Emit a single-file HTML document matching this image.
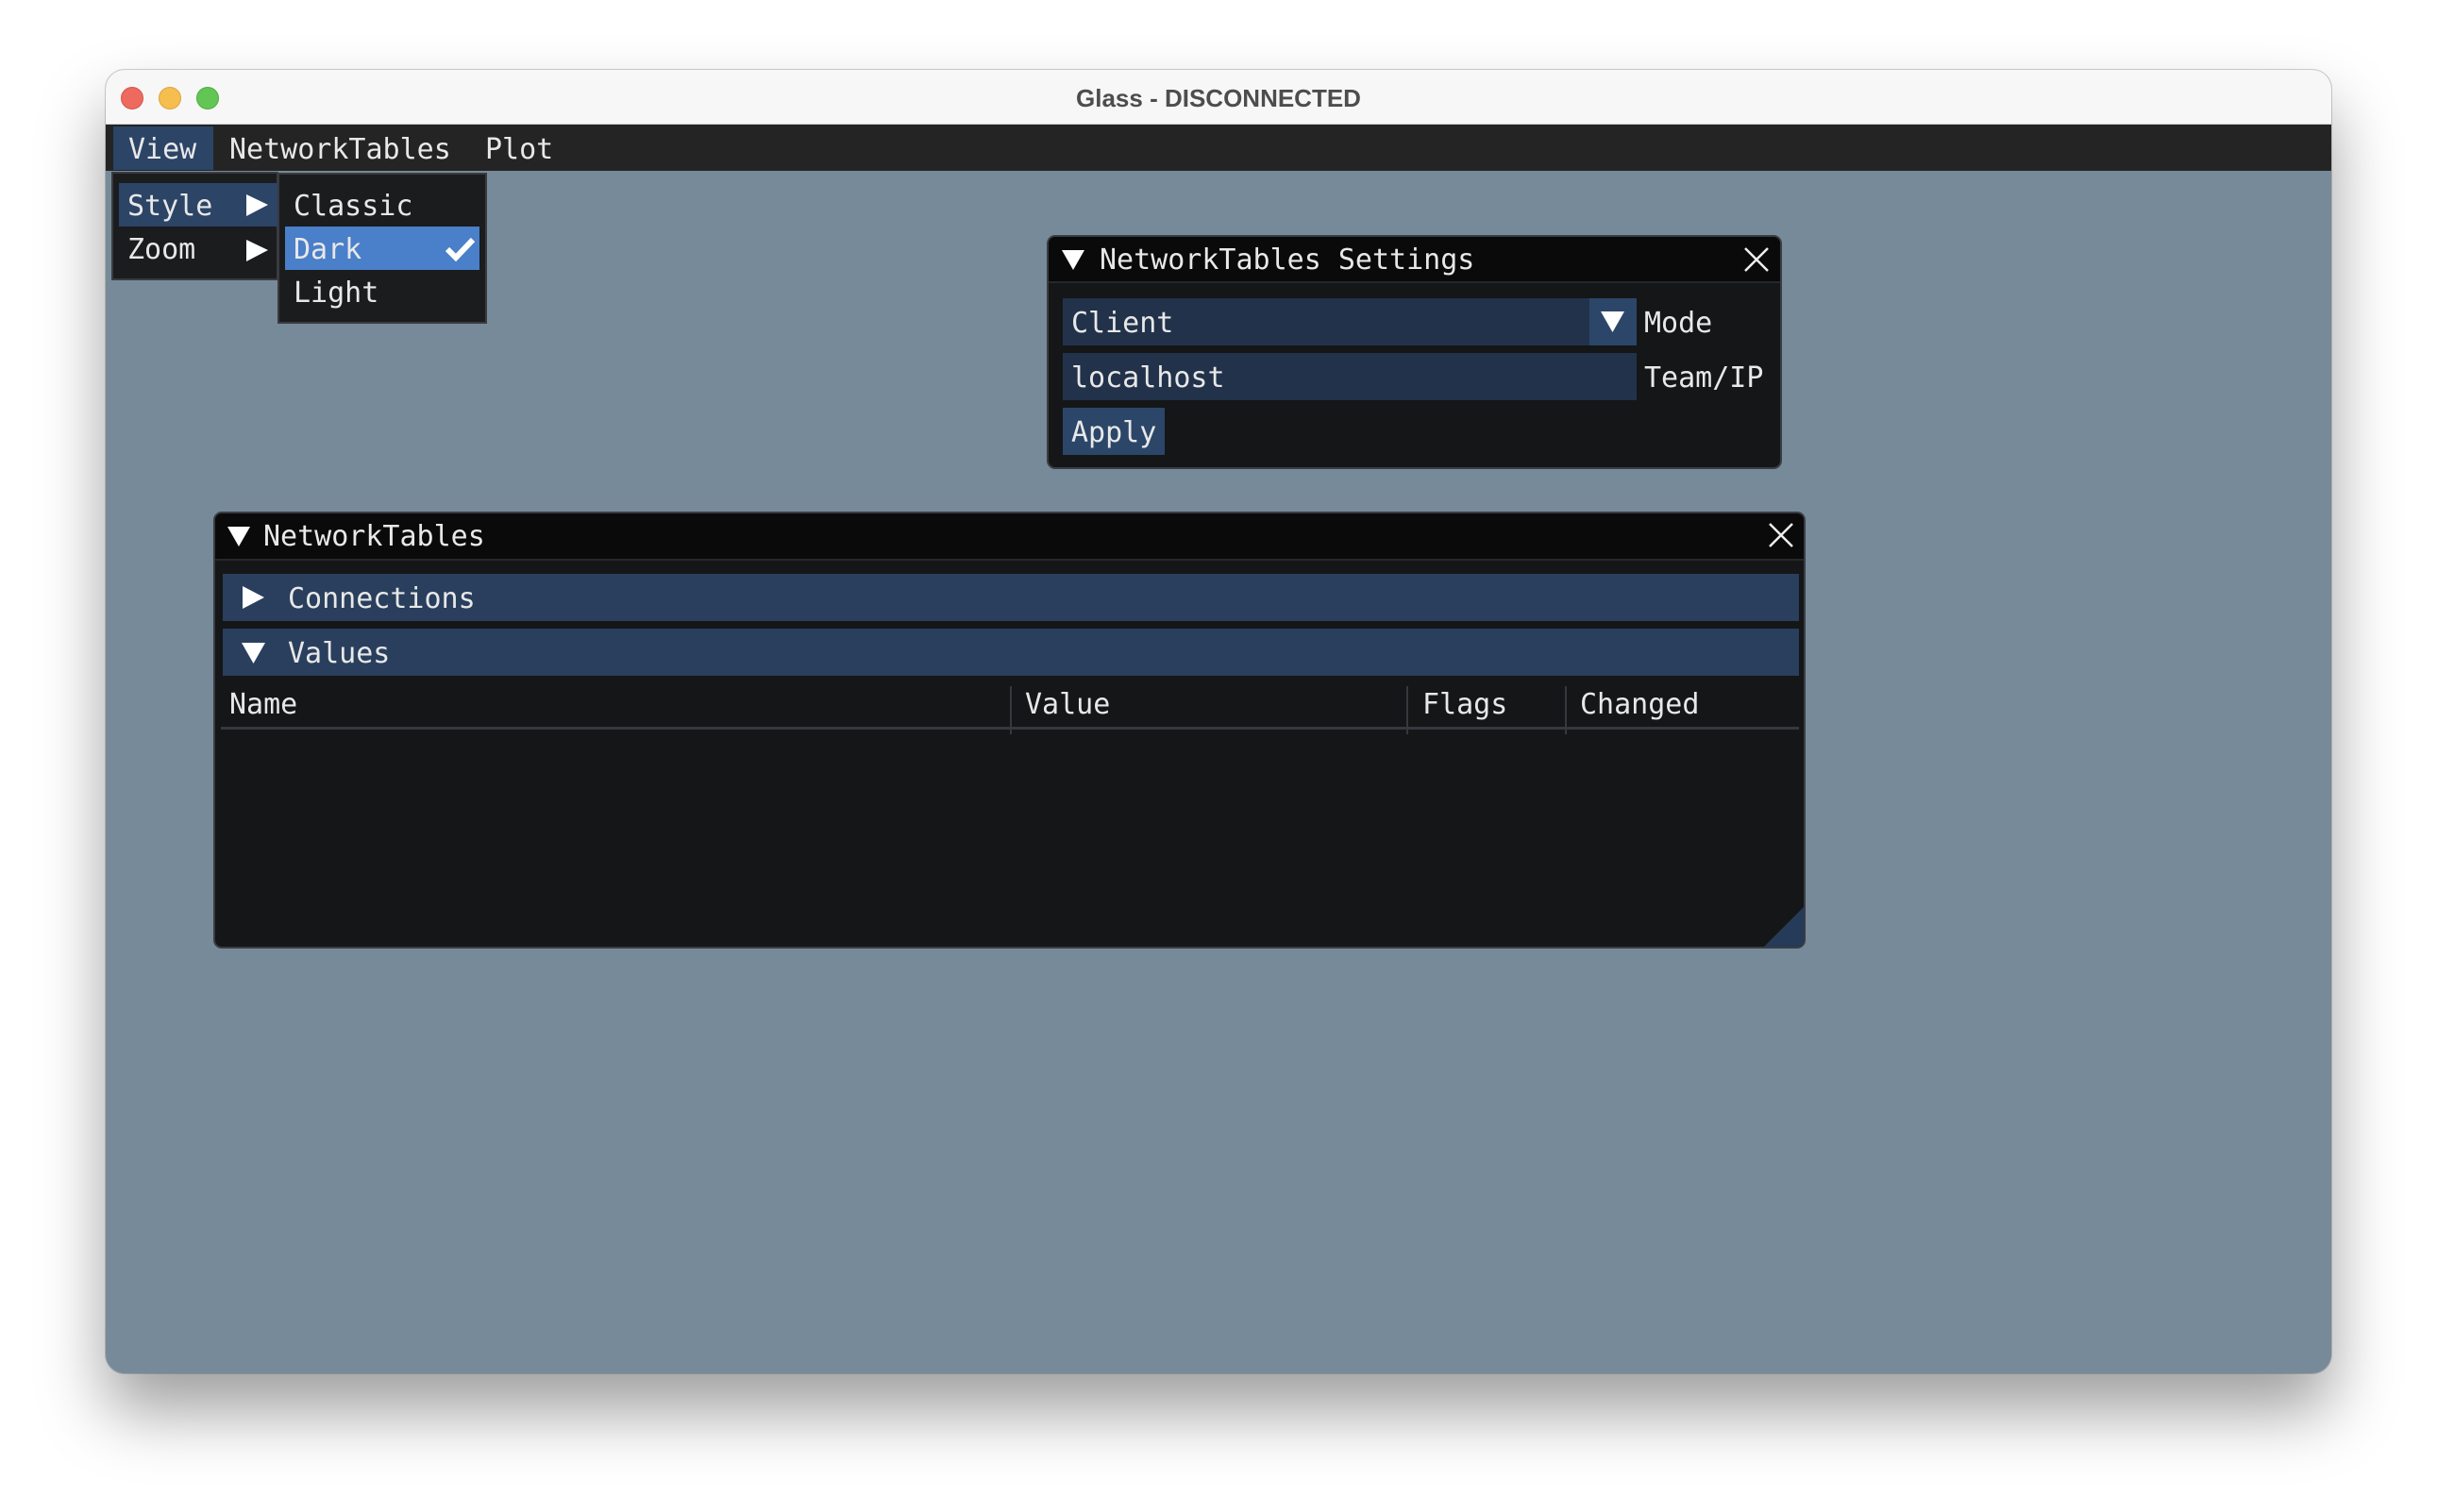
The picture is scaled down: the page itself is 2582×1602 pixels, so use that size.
<!DOCTYPE html>
<html><head><meta charset="utf-8"><style>
*{margin:0;padding:0;box-sizing:border-box}
body{width:2582px;height:1602px;background:#fff;position:relative;overflow:hidden;font-family:"DejaVu Sans Mono","Liberation Mono",monospace;font-size:30px;color:#e8e8e8}
.a{position:absolute}
.t{position:absolute;white-space:pre;line-height:1;display:flex;align-items:center;padding-top:3px}
</style></head><body>
<div class="a" style="left:112px;top:74px;width:2358px;height:1381px;border-radius:20px;background:#778a99;box-shadow:0 40px 70px rgba(0,0,0,0.38),0 0 0 1px rgba(0,0,0,0.18);overflow:hidden">
  <div class="a" style="left:0;top:0;width:2358px;height:58px;background:#f7f7f7;border-bottom:1px solid #d0d0d0"></div>
</div>
<div class="a" style="left:128px;top:92px;width:24px;height:24px;border-radius:50%;background:#ee6a5f;border:1px solid #d5554b"></div>
<div class="a" style="left:168px;top:92px;width:24px;height:24px;border-radius:50%;background:#f6be4f;border:1px solid #dca340"></div>
<div class="a" style="left:208px;top:92px;width:24px;height:24px;border-radius:50%;background:#62c654;border:1px solid #50ab43"></div>
<div class="t" style="left:0;width:2582px;top:82px;height:40px;justify-content:center;font-family:'Liberation Sans',sans-serif;font-weight:bold;font-size:26px;color:#4d4d4d">Glass - DISCONNECTED</div>

<div class="a" style="left:112px;top:132px;width:2358px;height:49px;background:#242424"></div>
<div class="a" style="left:120px;top:134px;width:106px;height:46px;background:#2c4466"></div>
<div class="t" style="left:136px;top:134px;height:46px">View</div>
<div class="t" style="left:243px;top:134px;height:46px">NetworkTables</div>
<div class="t" style="left:514px;top:134px;height:46px">Plot</div>

<div class="a" style="left:118px;top:182px;width:177px;height:115px;background:#1b1c1e;border:2px solid #3a3b40"></div>
<div class="a" style="left:126px;top:194px;width:168px;height:46px;background:#2c4466"></div>
<div class="t" style="left:135px;top:194px;height:46px">Style</div>
<div class="t" style="left:135px;top:240px;height:46px">Zoom</div>
<svg class="a" style="left:260px;top:204px" width="26" height="80"><polygon points="1,2 24,13 1,25" fill="#fff"/><polygon points="1,50 24,61 1,73" fill="#fff"/></svg>

<div class="a" style="left:294px;top:183px;width:222px;height:160px;background:#1b1c1e;border:2px solid #3a3b40"></div>
<div class="a" style="left:302px;top:240px;width:206px;height:46px;background:#4a7fc9"></div>
<div class="t" style="left:311px;top:194px;height:46px">Classic</div>
<div class="t" style="left:311px;top:240px;height:46px">Dark</div>
<div class="t" style="left:311px;top:286px;height:46px">Light</div>
<svg class="a" style="left:470px;top:250px" width="36" height="28"><polyline points="4,14 13,23 31,4" fill="none" stroke="#fff" stroke-width="6"/></svg>

<div class="a" style="left:1109px;top:249px;width:779px;height:248px;background:#151618;border:2px solid #3a3d44;border-radius:9px;overflow:hidden">
  <div class="a" style="left:0;top:0;width:779px;height:49px;background:#0a0a0a;border-bottom:2px solid #25272b"></div>
</div>
<svg class="a" style="left:1124px;top:264px" width="28" height="24"><polygon points="1,1 25,1 13,22" fill="#fff"/></svg>
<div class="t" style="left:1165px;top:250px;height:48px">NetworkTables Settings</div>
<svg class="a" style="left:1847px;top:261px" width="28" height="28"><path d="M2 2L26 26M26 2L2 26" stroke="#eee" stroke-width="2.5"/></svg>
<div class="a" style="left:1126px;top:316px;width:608px;height:50px;background:#22324b"></div>
<div class="a" style="left:1684px;top:316px;width:50px;height:50px;background:#2c4669"></div>
<svg class="a" style="left:1695px;top:329px" width="28" height="24"><polygon points="1,1 26,1 13.5,23" fill="#fff"/></svg>
<div class="t" style="left:1135px;top:316px;height:50px">Client</div>
<div class="t" style="left:1742px;top:316px;height:50px">Mode</div>
<div class="a" style="left:1126px;top:374px;width:608px;height:50px;background:#22324b"></div>
<div class="t" style="left:1135px;top:374px;height:50px">localhost</div>
<div class="t" style="left:1742px;top:374px;height:50px">Team/IP</div>
<div class="a" style="left:1126px;top:432px;width:108px;height:50px;background:#2c4669"></div>
<div class="t" style="left:1135px;top:432px;height:50px">Apply</div>

<div class="a" style="left:226px;top:542px;width:1687px;height:463px;background:#151618;border:2px solid #3a3d44;border-radius:9px;overflow:hidden">
  <div class="a" style="left:0;top:0;width:1687px;height:50px;background:#0a0a0a;border-bottom:2px solid #25272b"></div>
  <svg class="a" style="left:1637px;top:413px" width="50" height="50"><polygon points="0,50 50,0 50,50" fill="#263a59"/></svg>
</div>
<svg class="a" style="left:240px;top:557px" width="28" height="24"><polygon points="1,1 25,1 13,22" fill="#fff"/></svg>
<div class="t" style="left:279px;top:543px;height:48px">NetworkTables</div>
<svg class="a" style="left:1873px;top:553px" width="28" height="28"><path d="M2 2L26 26M26 2L2 26" stroke="#eee" stroke-width="2.5"/></svg>
<div class="a" style="left:236px;top:608px;width:1670px;height:50px;background:#293f5d"></div>
<svg class="a" style="left:256px;top:620px" width="26" height="28"><polygon points="1,1 24,13 1,25" fill="#fff"/></svg>
<div class="t" style="left:305px;top:608px;height:50px">Connections</div>
<div class="a" style="left:236px;top:666px;width:1670px;height:50px;background:#293f5d"></div>
<svg class="a" style="left:255px;top:680px" width="28" height="24"><polygon points="1,1 26,1 13.5,23" fill="#fff"/></svg>
<div class="t" style="left:305px;top:666px;height:50px">Values</div>
<div class="t" style="left:243px;top:722px;height:46px">Name</div>
<div class="t" style="left:1086px;top:722px;height:46px">Value</div>
<div class="t" style="left:1507px;top:722px;height:46px">Flags</div>
<div class="t" style="left:1674px;top:722px;height:46px">Changed</div>
<div class="a" style="left:234px;top:770px;width:1672px;height:3px;background:#36383d"></div>
<div class="a" style="left:1070px;top:727px;width:2px;height:51px;background:#36383d"></div>
<div class="a" style="left:1490px;top:727px;width:2px;height:51px;background:#36383d"></div>
<div class="a" style="left:1658px;top:727px;width:2px;height:51px;background:#36383d"></div>
</body></html>
